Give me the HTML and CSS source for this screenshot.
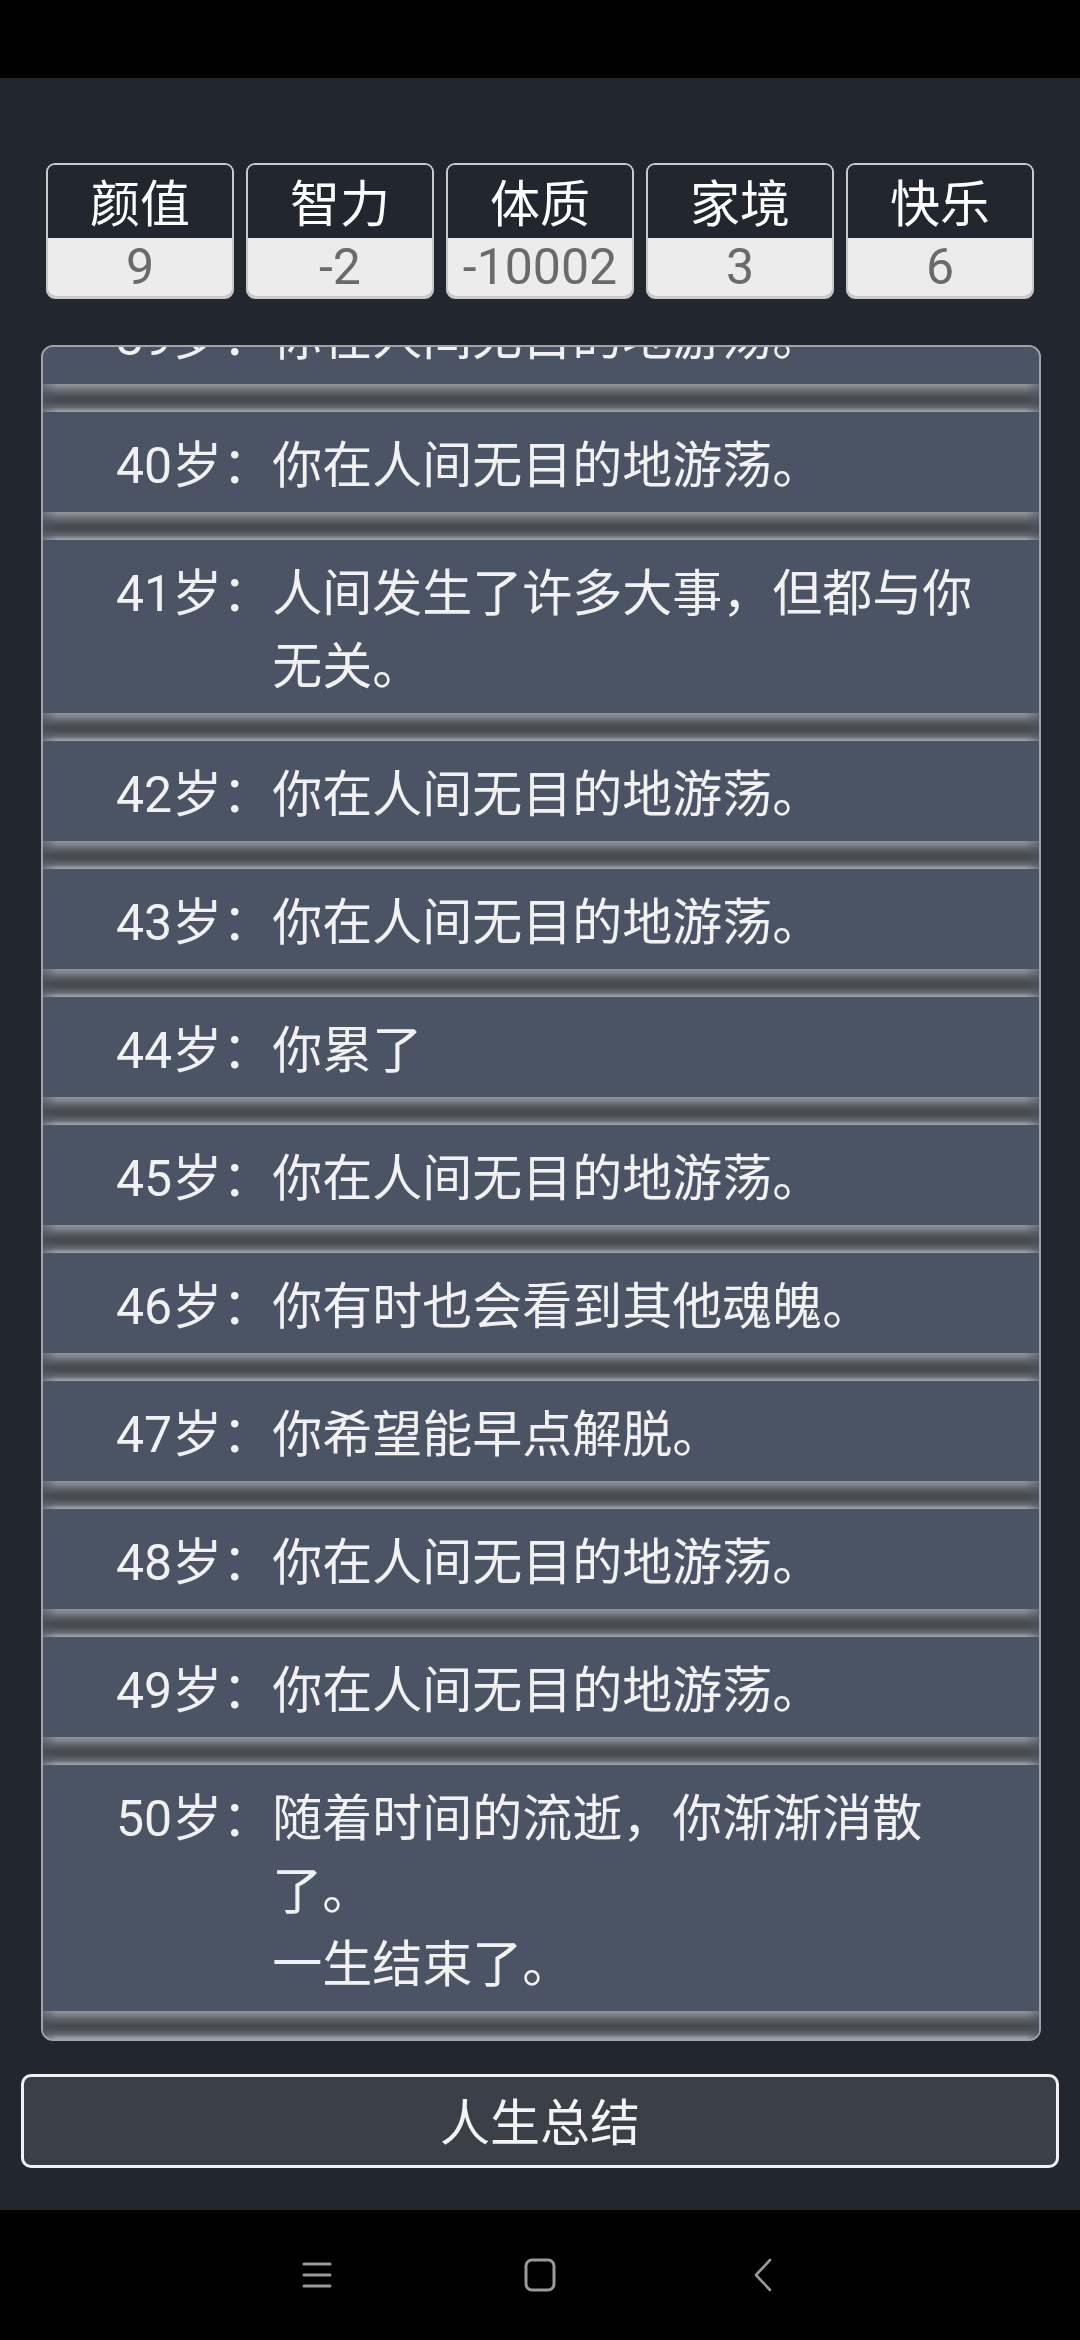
FILE: index.html
```html
<!DOCTYPE html>
<html lang="zh-CN">
<head>
<meta charset="utf-8">
<title>人生重开</title>
<link rel="stylesheet" href="styles.css">
</head>
<body>
<div class="statusbar"></div>
<main class="app">
  <section class="stats">
    <div class="stat"><div class="stat-label">颜值</div><div class="stat-value">9</div></div>
    <div class="stat"><div class="stat-label">智力</div><div class="stat-value">-2</div></div>
    <div class="stat"><div class="stat-label">体质</div><div class="stat-value">-10002</div></div>
    <div class="stat"><div class="stat-label">家境</div><div class="stat-value">3</div></div>
    <div class="stat"><div class="stat-label">快乐</div><div class="stat-value">6</div></div>
  </section>
  <section class="log">
    <ul class="log-list">
      <li class="entry"><span class="age">39岁：</span><span class="text">你在人间无目的地游荡。</span></li>
      <li class="entry"><span class="age">40岁：</span><span class="text">你在人间无目的地游荡。</span></li>
      <li class="entry"><span class="age">41岁：</span><span class="text">人间发生了许多大事，但都与你无关。</span></li>
      <li class="entry"><span class="age">42岁：</span><span class="text">你在人间无目的地游荡。</span></li>
      <li class="entry"><span class="age">43岁：</span><span class="text">你在人间无目的地游荡。</span></li>
      <li class="entry"><span class="age">44岁：</span><span class="text">你累了</span></li>
      <li class="entry"><span class="age">45岁：</span><span class="text">你在人间无目的地游荡。</span></li>
      <li class="entry"><span class="age">46岁：</span><span class="text">你有时也会看到其他魂魄。</span></li>
      <li class="entry"><span class="age">47岁：</span><span class="text">你希望能早点解脱。</span></li>
      <li class="entry"><span class="age">48岁：</span><span class="text">你在人间无目的地游荡。</span></li>
      <li class="entry"><span class="age">49岁：</span><span class="text">你在人间无目的地游荡。</span></li>
      <li class="entry"><span class="age">50岁：</span><span class="text">随着时间的流逝，你渐渐消散了。<br>一生结束了。</span></li>
    </ul>
  </section>
  <button class="summary">人生总结</button>
</main>
<nav class="navbar">
  <div class="nav-slot">
    <svg width="30" height="28" viewBox="0 0 30 28"><g stroke="#9a9a9a" stroke-width="3" stroke-linecap="round"><line x1="2" y1="3" x2="28" y2="3"/><line x1="2" y1="14" x2="28" y2="14"/><line x1="2" y1="25" x2="28" y2="25"/></g></svg>
  </div>
  <div class="nav-slot">
    <svg width="32" height="34" viewBox="0 0 32 34"><rect x="2" y="2" width="28" height="30" rx="6" ry="6" fill="none" stroke="#9a9a9a" stroke-width="3"/></svg>
  </div>
  <div class="nav-slot">
    <svg width="20" height="34" viewBox="0 0 20 34"><polyline points="17,2 3,17 17,32" fill="none" stroke="#9a9a9a" stroke-width="2.6" stroke-linecap="round" stroke-linejoin="round"/></svg>
  </div>
</nav>
</body>
</html>
```
FILE: styles.css
```css
* { box-sizing: border-box; }
html, body {
  margin: 0;
  padding: 0;
}
body {
  width: 1080px;
  height: 2340px;
  background: #000;
  font-family: Roboto, "Noto Sans CJK SC", sans-serif;
  display: flex;
  flex-direction: column;
  overflow: hidden;
}
.statusbar {
  height: 78px;
  background: #000;
  flex: none;
}
.app {
  height: 2132px;
  flex: none;
  background: #21262f;
  display: flex;
  flex-direction: column;
  align-items: flex-start;
}
.stats {
  margin: 85px 0 0 46px;
  width: 988px;
  display: grid;
  grid-template-columns: repeat(5, 1fr);
  column-gap: 12px;
}
.stat {
  height: 136px;
  border: 2px solid #c9c9c9;
  border-bottom-width: 3px;
  border-radius: 9px;
  overflow: hidden;
  display: flex;
  flex-direction: column;
}
.stat-label {
  height: 73px;
  background: #21262f;
  color: #ffffff;
  font-size: 50px;
  line-height: 73px;
  text-align: center;
  padding-top: 4px;
}
.stat-value {
  flex: 1;
  background: #ececec;
  color: #6a6a6a;
  font-size: 50px;
  line-height: 58px;
  text-align: center;
}
.log {
  margin: 46px 0 0 41px;
  width: 1000px;
  height: 1696px;
  border: 2px solid #a0a2a6;
  border-radius: 12px;
  overflow: hidden;
  background: #4b5464;
  flex: none;
}
.log-list {
  list-style: none;
  margin: -63px 0 0 0;
  padding: 0;
}
.entry {
  display: flex;
  padding: 18px 40px 9px 73px;
  font-size: 50px;
  line-height: 73px;
  color: #f1f1f1;
  background: #4b5464;
  position: relative;
  margin-bottom: 28px;
}
.entry::after {
  content: "";
  position: absolute;
  left: 0;
  right: 0;
  top: 100%;
  height: 28px;
  background: linear-gradient(180deg, #91959c 0%, #7b7f86 14%, #5a5d64 32%, #46494f 52%, #4b4e55 66%, #666a71 84%, #8b8f96 93%, #a2a6ac 100%);
}
.entry::before {
  content: "";
  position: absolute;
  left: 0;
  right: 0;
  top: 100%;
  height: 28px;
  z-index: 1;
  background: linear-gradient(90deg, rgba(75,84,100,0.55) 0, rgba(75,84,100,0) 14px, rgba(75,84,100,0) calc(100% - 14px), rgba(75,84,100,0.55) 100%);
}
.age {
  flex: none;
  min-width: 156px;
  white-space: nowrap;
}
.text {
  flex: 1;
  line-break: strict;
}
.summary {
  margin: 33px 0 0 21px;
  width: 1038px;
  height: 94px;
  border: 3px solid #f2f2f2;
  border-radius: 10px;
  background: #3b3f48;
  color: #f4f4f4;
  font-family: Roboto, "Noto Sans CJK SC", sans-serif;
  font-size: 50px;
  line-height: 82px;
  padding: 6px 0 0 0;
  text-align: center;
  flex: none;
}
.navbar {
  height: 130px;
  flex: none;
  background: #000;
  display: flex;
  justify-content: center;
  align-items: center;
}
.nav-slot {
  width: 223px;
  display: flex;
  justify-content: center;
  align-items: center;
  height: 40px;
}
```
